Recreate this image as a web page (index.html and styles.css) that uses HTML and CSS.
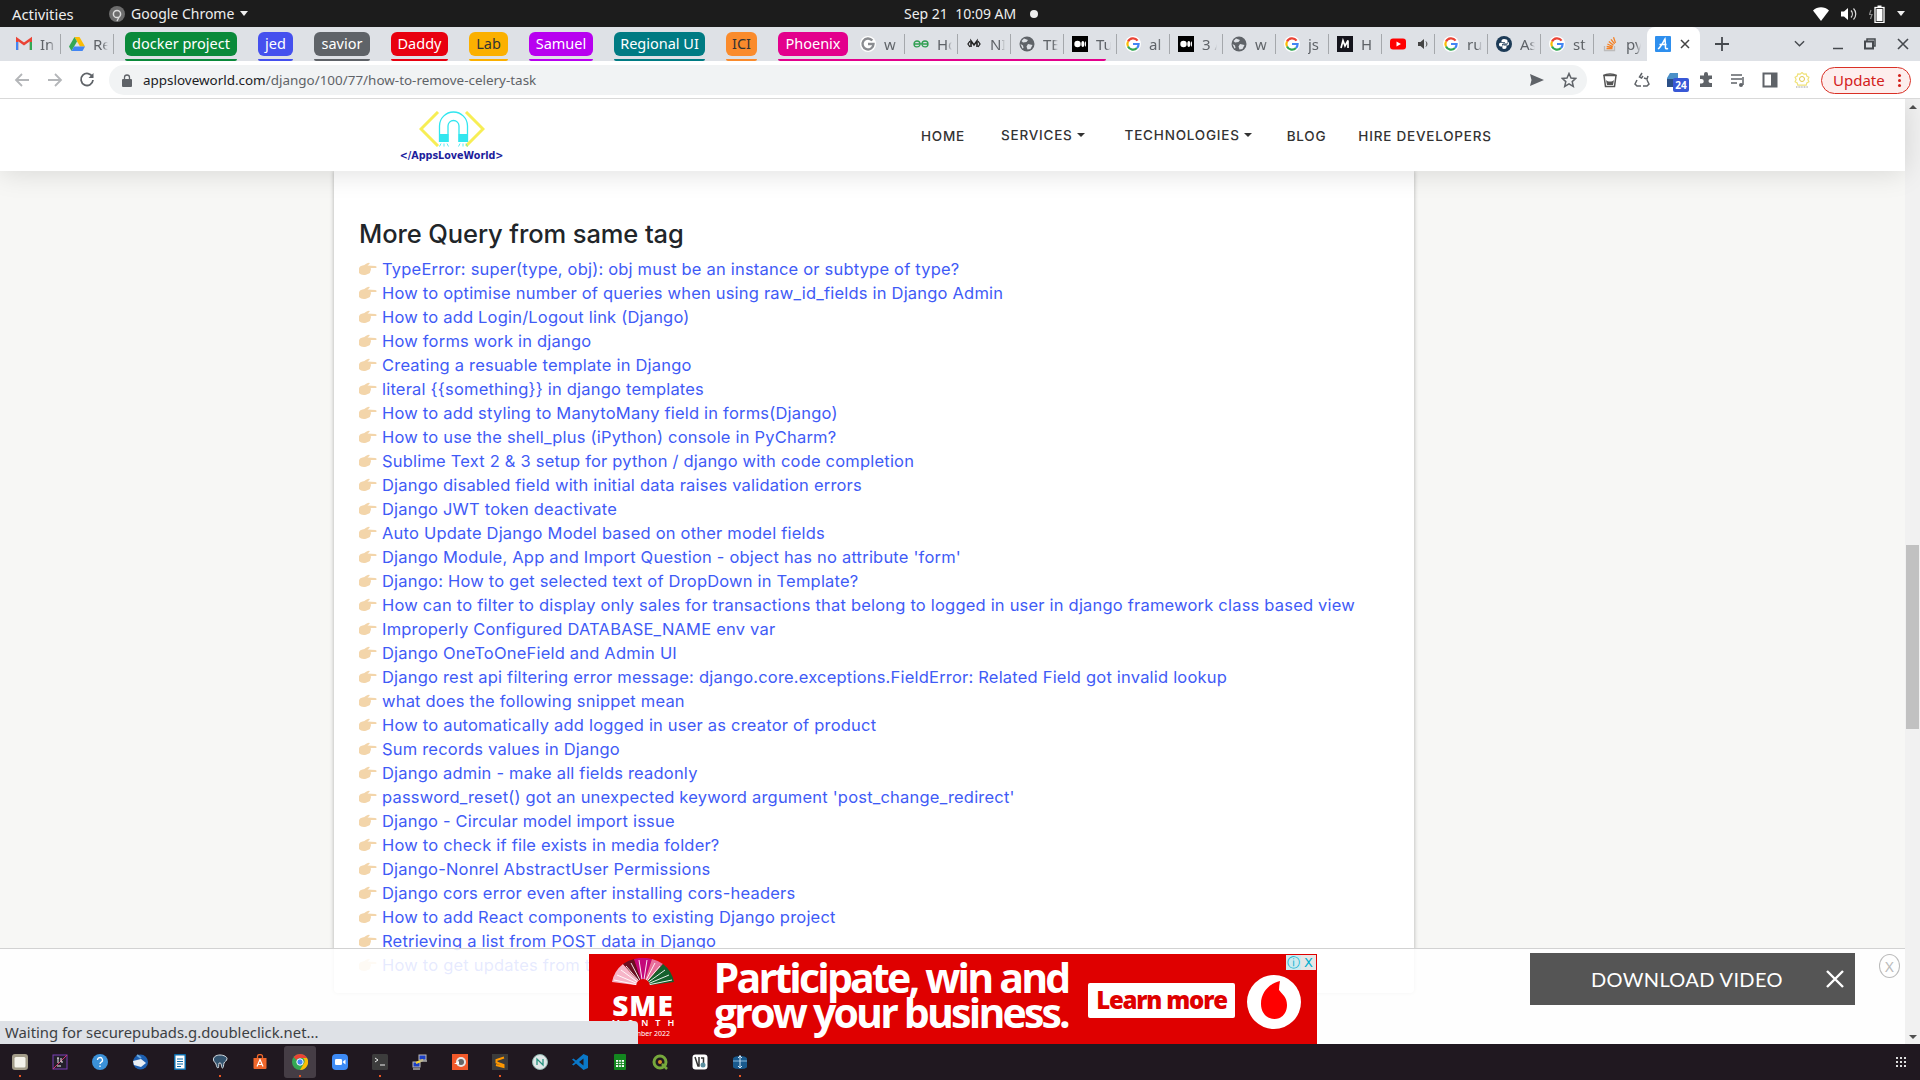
FILE: index.html
```html
<!DOCTYPE html>
<html lang="en">
<head>
<meta charset="utf-8">
<title>How to remove celery task</title>
<link rel="stylesheet" href="styles.css">
</head>
<body>
<svg class="defs" width="0" height="0" aria-hidden="true">
  <symbol id="i-g" viewBox="0 0 16 16"><circle cx="8" cy="8" r="8" fill="#fff"/><path d="M12.6 4.6A5.6 5.6 0 0 0 3 5.5" fill="none" stroke="#ea4335" stroke-width="2.2"/><path d="M3 5.5a5.6 5.6 0 0 0 0 5" fill="none" stroke="#fbbc05" stroke-width="2.2"/><path d="M3 10.500a5.600 5.600 0 0 0 9 1.500" fill="none" stroke="#34a853" stroke-width="2.2"/><path d="M12 12c1-1 1.600-2.200 1.600-4H8" fill="none" stroke="#4285f4" stroke-width="2.200"/></symbol>
  <symbol id="i-ggrey" viewBox="0 0 16 16"><circle cx="8" cy="8" r="8" fill="#fff"/><path d="M12.300 4.500A5.500 5.500 0 1 0 13.500 8H8" fill="none" stroke="#8a8c90" stroke-width="2.400"/></symbol>
  <symbol id="i-gfg" viewBox="0 0 16 16"><path d="M1 8h14M7 8c0-4-6-4-6 0s5 3.500 6 1M9 8c0-4 6-4 6 0s-5 3.500-6 1" fill="none" stroke="#2f9e50" stroke-width="1.300"/></symbol>
  <symbol id="i-mm" viewBox="0 0 16 16"><path d="M4 5 2 8l2 3M12 5l2 3-2 3" fill="none" stroke="#222" stroke-width="1.300"/><path d="M5 11V5l3 4 3-4v6" fill="none" stroke="#222" stroke-width="1.600"/></symbol>
  <symbol id="i-globe" viewBox="0 0 16 16"><circle cx="8" cy="8" r="7.500" fill="#5f6368"/><path d="M5 2.500 9 4 7.500 6 4 6.500 2.500 5zM9 8l4.500 1-2 4-3 .5-1-3zM1.500 8 4 9.500l.5 2.500-1 .5z" fill="#dee1e6"/></symbol>
  <symbol id="i-med" viewBox="0 0 16 16"><rect width="16" height="16" fill="#000"/><circle cx="5.500" cy="8" r="3.200" fill="#fff"/><ellipse cx="10.800" cy="8" rx="1.500" ry="3" fill="#fff"/><ellipse cx="13.400" cy="8" rx=".6" ry="2.700" fill="#fff"/></symbol>
  <symbol id="i-mb" viewBox="0 0 16 16"><rect width="16" height="16" fill="#14141c"/><path d="M4 12 6 4.500 8 10l3-5.500V12" fill="none" stroke="#fff" stroke-width="1.700"/></symbol>
  <symbol id="i-yt" viewBox="0 0 16 16"><rect y="2.500" width="16" height="11" rx="3" fill="#f00"/><path d="m6.500 5.500 4.500 2.500-4.500 2.500z" fill="#fff"/></symbol>
  <symbol id="i-py" viewBox="0 0 16 16"><circle cx="8" cy="8" r="8" fill="#1d3b57"/><path d="M8 3c-2 0-2.500 1-2.500 2v1H9v.8H4.500C3.500 6.800 3 7.500 3 8.500S3.600 10.500 4.500 10.500H6V9c0-1 .8-1.500 1.700-1.500h2.600c.7 0 1.200-.6 1.200-1.300V4.800C11.500 3.700 10 3 8 3z" fill="#fff"/><path d="M8 13c2 0 2.500-1 2.500-2v-1H7.500v-.6h4c1 0 1.500-.7 1.500-1.700S12.400 5.800 11.700 5.800v1.500c0 1-.8 1.500-1.700 1.500H7.500c-.7 0-1.200.6-1.200 1.300v1.200C6.300 12.300 6.500 13 8 13z" fill="#fff"/></symbol>
  <symbol id="i-so" viewBox="0 0 16 16"><path d="M2.500 10v4.500h10V10" fill="none" stroke="#bcbbbb" stroke-width="1.300"/><path d="M4.500 12.500h6M4.700 10.300l5.900 1.200M5.400 8l5.400 2.500M6.800 5.500l4.700 3.800M9 3.300l3.600 4.600M11.500 1.300l2 5.600" fill="none" stroke="#f48024" stroke-width="1.300"/></symbol>
  <symbol id="i-als" viewBox="0 0 16 16"><rect width="16" height="16" rx="1" fill="#2e8fee"/><path d="M3 13C6 11 8 6 10 3c.5 3 .3 6 .5 9 .2 1 1.500 1 2.500 .3M4.500 8.500h7" fill="none" stroke="#fff" stroke-width="1.500"/></symbol>
  <symbol id="i-hand" viewBox="0 0 18 14"><path d="M0 6.500C1 3.500 3 3.500 5 3.200 7 2 8.500 .8 10 .8c1 0 1 1-.2 1.700L8.500 3.400l7.800 .5c1.800 .2 1.800 2.200 0 2.200h-4.800c.8 .8 .6 1.500 0 1.900.5 .8 .2 1.500-.5 1.800.3 .9-.3 1.500-1 1.600L7 12.700C4 13.500 1.500 12.500 0 11z" fill="#f3d5aa"/></symbol>
</svg>

<header class="topbar">
  <div class="top-left">
    <span class="activities">Activities</span>
    <span class="app">
      <svg class="app-icon" viewBox="0 0 16 16"><circle cx="8" cy="8" r="8" fill="#6d6d6d"/><circle cx="8" cy="8" r="3.600" fill="none" stroke="#ddd" stroke-width="1.500"/><path d="M10 11l-2 4" stroke="#ddd" stroke-width="1.300"/></svg>
      Google Chrome
      <i class="caret-w"></i>
    </span>
  </div>
  <div class="clock"><span>Sep 21&nbsp; 10:09 AM</span><i class="rec"></i></div>
  <div class="tray">
    <svg class="tray-wifi" viewBox="0 0 16 14"><path d="M0 3.500C4.500-.8 11.500-.8 16 3.500L8 14z" fill="#fff"/></svg>
    <svg class="tray-vol" viewBox="0 0 16 14"><path d="M0 4.500h3L7 1v12L3 9.500H0z" fill="#fff"/><path d="M10 3.500c1.800 2 1.800 5 0 7M12.500 1.500c3 3 3 8 0 11" fill="none" stroke="#ddd" stroke-width="1.200"/></svg>
    <svg class="tray-bat" viewBox="0 0 16 18"><path d="M2 5 .5 9.500H3L1.500 14" fill="none" stroke="#888" stroke-width="1.200"/><rect x="6" y="2.500" width="9" height="15" fill="none" stroke="#fff" stroke-width="1.300"/><rect x="8.500" y=".5" width="4" height="2" fill="#fff"/><rect x="7.500" y="4" width="6" height="12" fill="#fff"/></svg>
    <i class="caret-w"></i>
  </div>
</header>

<nav class="tabstrip">
  <div class="tab"><svg class="fav" viewBox="0 0 16 16"><path d="M1 14V3l7 5 7-5v11" fill="none" stroke="#ea4335" stroke-width="2.400"/><path d="M1 14V6" stroke="#4285f4" stroke-width="2.400"/><path d="M15 14V6" stroke="#34a853" stroke-width="2.400"/></svg><span class="tab-label">In</span></div>
  <div class="tab"><svg class="fav" viewBox="0 0 16 16"><path d="M5.500 1h5L16 10.500h-5z" fill="#fbbc05"/><path d="M5.500 1 0 10.500 2.500 15 8 5.500z" fill="#34a853"/><path d="M2.500 15h11l2.500-4.500H5z" fill="#4285f4"/></svg><span class="tab-label">Re</span></div>
  <div class="group g-green"><span class="chip">docker project</span></div>
  <div class="group g-blue"><span class="chip">jed</span></div>
  <div class="group g-grey"><span class="chip">savior</span></div>
  <div class="group g-red"><span class="chip">Daddy</span></div>
  <div class="group g-yellow"><span class="chip">Lab</span></div>
  <div class="group g-purple"><span class="chip">Samuel</span></div>
  <div class="group g-teal"><span class="chip">Regional UI</span></div>
  <div class="group g-orange"><span class="chip">ICI</span></div>
  <div class="group g-pink">
    <span class="chip">Phoenix</span>
    <div class="tab"><svg class="fav"><use href="#i-ggrey"/></svg><span class="tab-label">w</span></div>
    <div class="tab"><svg class="fav"><use href="#i-gfg"/></svg><span class="tab-label">Ho</span></div>
    <div class="tab"><svg class="fav"><use href="#i-mm"/></svg><span class="tab-label">NI</span></div>
    <div class="tab"><svg class="fav"><use href="#i-globe"/></svg><span class="tab-label">TE</span></div>
    <div class="tab"><svg class="fav"><use href="#i-med"/></svg><span class="tab-label">Tu</span></div>
  </div>
  <div class="tab"><svg class="fav"><use href="#i-g"/></svg><span class="tab-label">al</span></div>
  <div class="tab"><svg class="fav"><use href="#i-med"/></svg><span class="tab-label">3 /</span></div>
  <div class="tab"><svg class="fav"><use href="#i-globe"/></svg><span class="tab-label">w</span></div>
  <div class="tab"><svg class="fav"><use href="#i-g"/></svg><span class="tab-label">js</span></div>
  <div class="tab"><svg class="fav"><use href="#i-mb"/></svg><span class="tab-label">H</span></div>
  <div class="tab"><svg class="fav"><use href="#i-yt"/></svg><svg class="tab-audio" viewBox="0 0 12 12"><path d="M0 4h2.500L6 1v10L2.500 8H0z" fill="#444"/><path d="M8 3.500c1.200 1.500 1.200 3.500 0 5" fill="none" stroke="#444"/></svg></div>
  <div class="tab"><svg class="fav"><use href="#i-g"/></svg><span class="tab-label">ru</span></div>
  <div class="tab"><svg class="fav"><use href="#i-py"/></svg><span class="tab-label">As</span></div>
  <div class="tab"><svg class="fav"><use href="#i-g"/></svg><span class="tab-label">st</span></div>
  <div class="tab tab-last"><svg class="fav"><use href="#i-so"/></svg><span class="tab-label">py</span></div>
  <div class="tab-active"><svg class="fav"><use href="#i-als"/></svg><svg class="tab-x" viewBox="0 0 10 10"><path d="m1 1 8 8M9 1 1 9" stroke="#444" stroke-width="1.500"/></svg></div>
  <svg class="new-tab" viewBox="0 0 14 14"><path d="M7 0v14M0 7h14" stroke="#45494e" stroke-width="1.800"/></svg>
  <svg class="win-chev" viewBox="0 0 12 8"><path d="m1 1 5 5 5-5" fill="none" stroke="#45494e" stroke-width="1.500"/></svg>
  <svg class="win-min" viewBox="0 0 12 12"><path d="M1 10.500h10" stroke="#45494e" stroke-width="1.500"/></svg>
  <svg class="win-max" viewBox="0 0 12 12"><path d="M3 3V1h8v7H9" fill="none" stroke="#45494e" stroke-width="1.500"/><rect x="1" y="3.500" width="8" height="7" fill="none" stroke="#45494e" stroke-width="2"/></svg>
  <svg class="win-close" viewBox="0 0 12 12"><path d="m1 1 10 10M11 1 1 11" stroke="#45494e" stroke-width="1.600"/></svg>
</nav>

<div class="toolbar">
  <svg class="tb back" viewBox="0 0 16 16"><path d="M15 8H2M8 2 2 8l6 6" fill="none" stroke="#b4b6b9" stroke-width="1.800"/></svg>
  <svg class="tb fwd" viewBox="0 0 16 16"><path d="M1 8h13M8 2l6 6-6 6" fill="none" stroke="#b4b6b9" stroke-width="1.800"/></svg>
  <svg class="tb reload" viewBox="0 0 16 16"><path d="M13.500 5A6 6 0 1 0 14 8" fill="none" stroke="#5f6368" stroke-width="1.800"/><path d="M14.500 1v5h-5z" fill="#5f6368"/></svg>
  <div class="omnibox">
    <svg class="lock" viewBox="0 0 10 13"><rect y="5" width="10" height="8" rx="1" fill="#5f6368"/><path d="M2.500 5V3.500a2.500 2.500 0 0 1 5 0V5" fill="none" stroke="#5f6368" stroke-width="1.300"/></svg>
    <span class="url"><b>appsloveworld.com</b>/django/100/77/how-to-remove-celery-task</span>
    <svg class="omni-send" viewBox="0 0 16 14"><path d="M1 1 15 7 1 13l1.500-6z" fill="#5f6368"/></svg>
    <svg class="omni-star" viewBox="0 0 16 16"><path d="m8 1.500 2 4.500 4.800.4-3.600 3.200 1.100 4.800L8 11.900l-4.300 2.500 1.100-4.800L1.200 6.400 6 6z" fill="none" stroke="#5f6368" stroke-width="1.500"/></svg>
  </div>
  <div class="exts">
    <svg class="ext" viewBox="0 0 16 16"><path d="M2 3.500h12l-1.500 11h-9z" fill="#fff" stroke="#555" stroke-width="1.500"/><path d="M1.500 3.500c3-2 10-2 13 0" fill="none" stroke="#555" stroke-width="1.500"/><path d="M4 8c2 2 6 2 8 0l-1 5H5z" fill="#555"/></svg>
    <svg class="ext" viewBox="0 0 16 16"><path d="m8 1-2.500 4 2 1L9 4M13 8l2 4-2 2H9M3 8l-2 4 2 2h4M10 6l3 1 1-3" fill="none" stroke="#5f6368" stroke-width="1.500"/></svg>
    <span class="ext ext-badge"><svg class="ext-s" viewBox="0 0 16 16"><path d="M1 6 4 1h8v6H1z" fill="#4a90c8"/><path d="M1 7h11v8H1z" fill="#2b4f87"/></svg><b class="badge">24</b></span>
    <svg class="ext" viewBox="0 0 16 16"><path d="M6 2a2 2 0 0 1 4 0v1.500h4V7h-1.500a2 2 0 0 0 0 4H14v4H2v-3.500h1.500a2.200 2.200 0 0 0 0-4.500H2V3.500h4z" fill="#5f6368"/></svg>
    <svg class="ext" viewBox="0 0 16 16"><path d="M1 3h11M1 7h11M1 11h6" stroke="#5f6368" stroke-width="1.500"/><path d="M13 5v8" stroke="#5f6368" stroke-width="1.500"/><circle cx="11" cy="13" r="2" fill="#5f6368"/></svg>
    <svg class="ext" viewBox="0 0 16 16"><rect x="1.500" y="1.500" width="13" height="13" fill="none" stroke="#5f6368" stroke-width="2"/><rect x="9" y="1.500" width="5.500" height="13" fill="#5f6368"/></svg>
    <svg class="ext" viewBox="0 0 16 16"><path d="M8 .5l1.800 1.600 2.400-.3.600 2.300 2.100 1.200-1 2.200 1 2.200-2.100 1.200-.6 2.300H3.800l-.6-2.300L1.100 9.700l1-2.200-1-2.200 2.100-1.200.6-2.300 2.400.3z" fill="none" stroke="#f0e27a" stroke-width="1.200"/><circle cx="8" cy="7" r="2.500" fill="none" stroke="#e2c94c"/><path d="M2 15h12" stroke="#999" stroke-dasharray="1 .6"/></svg>
    <div class="update"><span>Update</span><i class="dots"></i></div>
  </div>
</div>

<div class="viewport">
  <div class="page">
    <div class="site-nav">
      <div class="logo">
        <svg class="logo-mark" viewBox="0 0 66 36">
          <path d="M19 1 2 18 19 35M47 1 64 18 47 35" fill="none" stroke="#f7ee55" stroke-width="3"/>
          <path d="M20.500 31V15a14 14 0 0 1 28 0V31" fill="none" stroke="#31e6ef" stroke-width="1.300"/>
          <path d="M29 31V15a5.500 5.500 0 0 1 11 0V31" fill="none" stroke="#31e6ef" stroke-width="1.300"/>
          <rect x="20" y="23" width="9.500" height="8" fill="#31e6ef"/><rect x="39.500" y="23" width="9.500" height="8" fill="#31e6ef"/>
          <path d="M25 32.500v3M22 32.500l-1.500 3M28 32.500l1.500 3M44 32.500v3M41 32.500l-1.500 3M47 32.500l1.500 3" stroke="#31e6ef" stroke-width=".8"/>
        </svg>
        <span class="logo-text">&lt;/AppsLoveWorld&gt;</span>
      </div>
      <ul class="menu">
        <li class="m-home">HOME</li>
        <li class="m-drop m-services">SERVICES<i class="caret-d"></i></li>
        <li class="m-drop m-tech">TECHNOLOGIES<i class="caret-d"></i></li>
        <li class="m-blog">BLOG</li>
        <li class="m-hire">HIRE DEVELOPERS</li>
      </ul>
    </div>
    <main class="main">
      <section class="card">
        <h2 class="card-title">More Query from same tag</h2>
        <ul class="links">
          <li><svg class="hand"><use href="#i-hand"/></svg><a>TypeError: super(type, obj): obj must be an instance or subtype of type?</a></li>
          <li><svg class="hand"><use href="#i-hand"/></svg><a>How to optimise number of queries when using raw_id_fields in Django Admin</a></li>
          <li><svg class="hand"><use href="#i-hand"/></svg><a>How to add Login/Logout link (Django)</a></li>
          <li><svg class="hand"><use href="#i-hand"/></svg><a>How forms work in django</a></li>
          <li><svg class="hand"><use href="#i-hand"/></svg><a>Creating a resuable template in Django</a></li>
          <li><svg class="hand"><use href="#i-hand"/></svg><a>literal {{something}} in django templates</a></li>
          <li><svg class="hand"><use href="#i-hand"/></svg><a>How to add styling to ManytoMany field in forms(Django)</a></li>
          <li><svg class="hand"><use href="#i-hand"/></svg><a>How to use the shell_plus (iPython) console in PyCharm?</a></li>
          <li><svg class="hand"><use href="#i-hand"/></svg><a>Sublime Text 2 &amp; 3 setup for python / django with code completion</a></li>
          <li><svg class="hand"><use href="#i-hand"/></svg><a>Django disabled field with initial data raises validation errors</a></li>
          <li><svg class="hand"><use href="#i-hand"/></svg><a>Django JWT token deactivate</a></li>
          <li><svg class="hand"><use href="#i-hand"/></svg><a>Auto Update Django Model based on other model fields</a></li>
          <li><svg class="hand"><use href="#i-hand"/></svg><a>Django Module, App and Import Question - object has no attribute 'form'</a></li>
          <li><svg class="hand"><use href="#i-hand"/></svg><a>Django: How to get selected text of DropDown in Template?</a></li>
          <li><svg class="hand"><use href="#i-hand"/></svg><a>How can to filter to display only sales for transactions that belong to logged in user in django framework class based view</a></li>
          <li><svg class="hand"><use href="#i-hand"/></svg><a>Improperly Configured DATABASE_NAME env var</a></li>
          <li><svg class="hand"><use href="#i-hand"/></svg><a>Django OneToOneField and Admin UI</a></li>
          <li><svg class="hand"><use href="#i-hand"/></svg><a>Django rest api filtering error message: django.core.exceptions.FieldError: Related Field got invalid lookup</a></li>
          <li><svg class="hand"><use href="#i-hand"/></svg><a>what does the following snippet mean</a></li>
          <li><svg class="hand"><use href="#i-hand"/></svg><a>How to automatically add logged in user as creator of product</a></li>
          <li><svg class="hand"><use href="#i-hand"/></svg><a>Sum records values in Django</a></li>
          <li><svg class="hand"><use href="#i-hand"/></svg><a>Django admin - make all fields readonly</a></li>
          <li><svg class="hand"><use href="#i-hand"/></svg><a>password_reset() got an unexpected keyword argument 'post_change_redirect'</a></li>
          <li><svg class="hand"><use href="#i-hand"/></svg><a>Django - Circular model import issue</a></li>
          <li><svg class="hand"><use href="#i-hand"/></svg><a>How to check if file exists in media folder?</a></li>
          <li><svg class="hand"><use href="#i-hand"/></svg><a>Django-Nonrel AbstractUser Permissions</a></li>
          <li><svg class="hand"><use href="#i-hand"/></svg><a>Django cors error even after installing cors-headers</a></li>
          <li><svg class="hand"><use href="#i-hand"/></svg><a>How to add React components to existing Django project</a></li>
          <li><svg class="hand"><use href="#i-hand"/></svg><a>Retrieving a list from POST data in Django</a></li>
          <li><svg class="hand"><use href="#i-hand"/></svg><a>How to get updates from the model in Django</a></li>
        </ul>
      </section>
    </main>
  </div>
  <div class="scrollbar">
    <i class="sb-up"></i>
    <i class="sb-thumb"></i>
    <i class="sb-down"></i>
  </div>

  <aside class="anchor">
    <div class="ad">
      <div class="sme">
        <svg class="fan" viewBox="0 0 64 28">
          <path d="M32 28 1 24A32 30 0 0 1 12 6z" fill="#f6b5c8"/>
          <path d="M32 28 12 6A32 30 0 0 1 23 1z" fill="#6a0f20"/>
          <path d="M32 28 23 1A32 30 0 0 1 41 1z" fill="#c4087a"/>
          <path d="M32 28 41 1A32 30 0 0 1 52 6z" fill="#e8709c"/>
          <path d="M32 28 52 6A32 30 0 0 1 63 24z" fill="#14602c"/>
          <path d="M3 22 32 28M6 17 32 28M10 12 32 28M15 8 32 28M20 5 32 28M28 2 32 28M36 2 32 28M44 5 32 28M49 8 32 28M54 12 32 28M58 17 32 28M61 22 32 28" stroke="#fff" stroke-width=".9"/>
          <circle cx="32" cy="28" r="7" fill="#df0000"/>
        </svg>
        <span class="sme-t">SME</span>
        <span class="sme-m">MONTH</span>
        <span class="sme-d">September 2022</span>
      </div>
      <div class="ad-copy"><span>Participate, win and</span><span>grow your business.</span></div>
      <div class="ad-btn">Learn more</div>
      <svg class="voda" viewBox="0 0 54 54"><circle cx="27" cy="27" r="27" fill="#fff"/><path d="M33 6C24 8 14 16 14 29c0 9 6 15 13.500 15S40 38 40 30c0-8-5-11-8-15 0-3 .5-6 1-9z" fill="#f00"/></svg>
      <div class="ad-marks"><span class="mark-i">&#9432;</span><span class="mark-x">X</span></div>
    </div>
    <div class="video"><span>DOWNLOAD VIDEO</span><svg class="video-x" viewBox="0 0 18 18"><path d="m1 1 16 16M17 1 1 17" stroke="#fff" stroke-width="2.400"/></svg></div>
    <span class="circle-x">X</span>
  </aside>
  <div class="status">Waiting for securepubads.g.doubleclick.net...</div>
</div>

<footer class="dock">
  <span class="dk on"><svg viewBox="0 0 16 16"><rect width="16" height="16" rx="3" fill="#a39c88"/><rect x="2.500" y="3" width="11" height="10.500" rx="1.500" fill="#f4f2ea"/></svg></span>
  <span class="dk"><svg viewBox="0 0 16 16"><rect x="1" y="1" width="14" height="14" fill="#23202a" stroke="#7b3fb6"/><path d="M1 15 15 1" stroke="#d3326c" stroke-width="1"/><path d="M5 4h2M6 4v5M9 4v4h2M5 12h4" stroke="#eee" fill="none"/></svg></span>
  <span class="dk"><svg viewBox="0 0 16 16"><circle cx="8" cy="8" r="8" fill="#3b91d8"/><path d="M5.500 6a2.500 2.500 0 1 1 3.500 2.300C8.200 8.700 8 9.200 8 10M8 11.500V13" fill="none" stroke="#fff" stroke-width="1.300"/></svg></span>
  <span class="dk"><svg viewBox="0 0 16 16"><circle cx="8.500" cy="8" r="7.500" fill="#1d5fb0"/><path d="M1 7l8-2 5 4-5 4-7-2z" fill="#e9eef4"/><path d="M5 1 9 4" stroke="#6aa8e0" stroke-width="2"/></svg></span>
  <span class="dk"><svg viewBox="0 0 16 16"><rect x="2" width="12" height="16" rx="1" fill="#0b6aa8"/><rect x="3.500" y="1.500" width="9" height="13" fill="#fff"/><path d="M5 5h6M5 7.500h6M5 10h6M5 12.500h4" stroke="#0b6aa8"/></svg></span>
  <span class="dk on"><svg viewBox="0 0 16 16"><path d="M8 1C4 1 1 3 1.500 6c.3 2 2 2.500 2.500 4 .5 2 1 4 2 4s.5-3 1-5c1 0 1.500 0 2 .5.5 2 .5 4.500 1.500 4.500s1-3 1.500-5c.5-1.500 3-2 3-4.500C15 3 12 1 8 1z" fill="#33536e" stroke="#d5dde3"/></svg></span>
  <span class="dk"><svg viewBox="0 0 16 16"><path d="M1.500 4h13v10a1 1 0 0 1-1 1h-11a1 1 0 0 1-1-1z" fill="#f1672b"/><path d="M5.500 4V2.500a2.500 2 0 0 1 5 0V4" fill="none" stroke="#f1672b" stroke-width="1.300"/><path d="m5 12.500 3-7 3 7M6.500 10.500h3" fill="none" stroke="#fff" stroke-width="1.200"/></svg></span>
  <span class="dk dk-active on"><svg viewBox="0 0 16 16"><circle cx="8" cy="8" r="8" fill="#34a853"/><path d="M8 0a8 8 0 0 1 7 4H8a4 4 0 0 0-3.500 2L1.700 3A8 8 0 0 1 8 0z" fill="#ea4335"/><path d="M15 4a8 8 0 0 1-7 12l3.500-6A4 4 0 0 0 11 4z" fill="#fbbc05"/><circle cx="8" cy="8" r="3.200" fill="#4285f4" stroke="#fff"/></svg></span>
  <span class="dk"><svg viewBox="0 0 16 16"><rect width="16" height="16" rx="4" fill="#3d8bf5"/><rect x="3" y="5" width="7" height="6" rx="1.300" fill="#fff"/><path d="m10.500 8 3-2.500v5z" fill="#fff"/></svg></span>
  <span class="dk on"><svg viewBox="0 0 16 16"><rect width="16" height="16" rx="1.500" fill="#3c3c3c"/><path d="m3 4 3 2-3 2M8 11h5" fill="none" stroke="#eee"/></svg></span>
  <span class="dk"><svg viewBox="0 0 16 16"><rect x="7" y="1" width="7" height="5" fill="#1c3fc4" stroke="#bbb"/><rect x="1" y="8" width="7" height="5" fill="#1c3fc4" stroke="#bbb"/><path d="M11 6 4 9" stroke="#f2d13a" stroke-width="2"/><path d="M1 15h7M8 7h7" stroke="#aaa" stroke-width="1.500"/></svg></span>
  <span class="dk"><svg viewBox="0 0 16 16"><rect width="16" height="16" fill="#f1592a"/><circle cx="9" cy="8" r="5" fill="#e8e8e8"/><circle cx="9" cy="8" r="3" fill="#666"/><path d="M2 10l5-3v3z" fill="#fff"/></svg></span>
  <span class="dk on"><svg viewBox="0 0 16 16"><rect width="16" height="16" fill="#3b3b3b"/><path d="M12 3.500 4.500 6v2.500L11.500 11v2L4 11" fill="none" stroke="#ff9800" stroke-width="2"/></svg></span>
  <span class="dk"><svg viewBox="0 0 16 16"><circle cx="8" cy="8" r="7.500" fill="#dfe7e7" stroke="#8fb5ad"/><path d="M5 11V5l6 6V5" fill="none" stroke="#26927e" stroke-width="1.300"/></svg></span>
  <span class="dk"><svg viewBox="0 0 16 16"><path d="M11.500 0 16 2v12l-4.500 2L4 9.500 1.500 11.500 0 10.500 3 8 0 5.500 1.500 4.500 4 6.500z" fill="#0a78c8"/><path d="M11.500 4.500 7 8l4.500 3.500z" fill="#201820"/></svg></span>
  <span class="dk"><svg viewBox="0 0 16 16"><rect x="2" width="12" height="16" rx="1" fill="#13861f"/><rect x="4" y="6" width="8" height="7" fill="#fff"/><path d="M4 8.300h8M4 10.600h8M6.700 6v7M9.300 6v7" stroke="#13861f"/></svg></span>
  <span class="dk"><svg viewBox="0 0 16 16"><circle cx="8" cy="8" r="6" fill="none" stroke="#76a83c" stroke-width="3"/><circle cx="8" cy="8" r="2" fill="#d28b26"/><path d="m10 10 5 5" stroke="#76a83c" stroke-width="2.500"/></svg></span>
  <span class="dk"><svg viewBox="0 0 16 16"><rect x=".5" y=".5" width="15" height="15" rx="3" fill="#fff"/><path d="m3 3 3 9h1V3M9 4h2.500v5" fill="none" stroke="#333" stroke-width="1.500"/><circle cx="11" cy="11" r="2.500" fill="#5a8fa0"/></svg></span>
  <span class="dk on"><svg viewBox="0 0 16 16"><path d="M1 5c0-2 3-3 7-3s7 1 7 3v8c0 1-3 2-7 2s-7-1-7-2z" fill="#195a8e"/><path d="M1 7h14" stroke="#8bb8da"/><path d="M8 1v13M6 4l2-2 2 2M6 12l2 2 2-2" fill="none" stroke="#cfe6f7"/></svg></span>
  <span class="dock-grid"></span>
</footer>
</body>
</html>
```

FILE: styles.css
```css
* { box-sizing: border-box; }
html, body { margin: 0; height: 100%; }
body {
  width: 1920px; height: 1080px; overflow: hidden;
  display: flex; flex-direction: column;
  font-family: "Noto Sans", sans-serif;
  background: #fff;
}
.defs { position: absolute; }
i { display: block; font-style: normal; }
ul { list-style: none; margin: 0; padding: 0; }

/* GNOME top bar */
.topbar {
  height: 27px; flex: none; background: #1c1c1c; color: #eee;
  display: flex; align-items: center; font-size: 14px; position: relative;
}
.top-left { width: 904px; display: flex; align-items: center; padding-left: 12px; }
.activities { width: 97px; font-size: 14.800px; }
.app { display: flex; align-items: center; gap: 6px; white-space: nowrap; }
.app-icon { width: 16px; height: 16px; }
.caret-w { width: 0; height: 0; border: 4.500px solid transparent; border-top: 5px solid #eee; border-bottom: 0; }
.clock { display: flex; align-items: center; gap: 14px; flex: 1; }
.rec { width: 8px; height: 8px; border-radius: 50%; background: #eee; }
.tray { display: flex; align-items: center; padding-right: 15px; gap: 12px; }
.tray-wifi { width: 16px; height: 14px; }
.tray-vol { width: 16px; height: 14px; }
.tray-bat { width: 16px; height: 18px; }

/* tab strip */
.tabstrip {
  height: 34px; flex: none; background: #dee1e6;
  display: flex; align-items: flex-start; padding: 7px 0 0 8px;
  font-size: 14px; color: #5f6368;
}
.tab {
  flex: none; width: 53px; height: 20px; padding-left: 8px;
  display: flex; align-items: center; gap: 8px; overflow: hidden;
  border-right: 1px solid #a5a8ac; margin-top: 0;
}
.fav { width: 16px; height: 16px; flex: none; }
.tab-label {
  white-space: nowrap; font-size: 15px; width: 15px; overflow: hidden; flex: none;
  -webkit-mask-image: linear-gradient(90deg, #000 65%, transparent);
  mask-image: linear-gradient(90deg, #000 65%, transparent);
}
.tab-audio { width: 12px; height: 12px; margin-left: 4px; }
.tab-last { border-right: 0; }

.group {
  flex: none; height: 29px; margin: -2px 0 -5px 21px;
  display: flex; align-items: flex-start;
  border-bottom: 2px solid var(--c);
  border-radius: 0 0 2px 2px;
}
.group:nth-child(3) { margin-left: 11px; }
.chip {
  flex: none; width: var(--w); height: 24px; border-radius: 6px;
  background: var(--c); color: #fff; font-size: 14.500px; line-height: 23px;
  text-align: center; white-space: nowrap;
}
.g-green { --c: #0a8a3a; --w: 112px; }
.g-blue { --c: #4550ee; --w: 35px; }
.g-grey { --c: #5f6368; --w: 56px; }
.g-red { --c: #e8000f; --w: 57px; }
.g-yellow { --c: #fbb000; --w: 39px; }
.g-yellow .chip, .g-orange .chip { color: #333; }
.g-purple { --c: #b800f0; --w: 64px; }
.g-teal { --c: #007b83; --w: 91px; }
.g-orange { --c: #fa8b2c; --w: 31px; }
.g-pink { --c: #e3008c; --w: 70px; width: 328px; margin-right: 11px; }
.g-pink .chip { margin-right: 4px; }
.g-pink .tab { margin-top: 2px; }

.tab-active {
  flex: none; width: 53px; height: 34px; margin-top: -7px;
  background: #fff; border-radius: 8px 8px 0 0;
  display: flex; align-items: center; gap: 9px; padding-left: 8px;
}
.tab-x { width: 10px; height: 10px; }
.new-tab { width: 14px; height: 14px; margin: 3px 0 0 15px; flex: none; }
.win-chev { width: 11px; height: 8px; margin: 6px 0 0 65px; flex: none; }
.win-min { width: 12px; height: 12px; margin: 4px 0 0 27px; flex: none; }
.win-max { width: 12px; height: 12px; margin: 4px 0 0 20px; flex: none; }
.win-close { width: 12px; height: 12px; margin: 4px 0 0 21px; flex: none; }

/* toolbar */
.toolbar {
  height: 38px; flex: none; background: #fff; border-bottom: 1px solid #d9d9d9;
  display: flex; align-items: flex-start; padding: 4px 10px 0 14px;
}
.tb { width: 16px; height: 16px; flex: none; margin-top: 7px; }
.fwd { margin-left: 17px; }
.reload { margin-left: 16px; }
.omnibox {
  width: 1478px; height: 30px; margin-left: 14px; flex: none;
  background: #f1f3f4; border-radius: 15px;
  display: flex; align-items: center; padding: 0 10px 0 13px;
}
.lock { width: 10px; height: 13px; flex: none; }
.url { margin-left: 11px; font-size: 13.450px; color: #5f6368; flex: 1; white-space: nowrap; margin-top: -1px; }
.url b { font-weight: 400; color: #202124; }
.omni-send { width: 16px; height: 14px; flex: none; }
.omni-star { width: 16px; height: 16px; margin-left: 16px; flex: none; }
.exts { display: flex; align-items: center; height: 30px; margin-left: 15px; flex: none; }
.ext { width: 16px; height: 16px; margin-right: 16px; flex: none; }
.ext-badge { display: block; position: relative; }
.ext-s { width: 16px; height: 16px; display: block; }
.badge {
  position: absolute; left: 7px; top: 6px; width: 16px; height: 14px;
  background: #3858d6; color: #fff; font-size: 10px; line-height: 14px;
  text-align: center; border-radius: 2px;
}
.update {
  width: 90px; height: 27px; margin-left: -5px; flex: none;
  border: 1px solid #d93025; border-radius: 14px; background: #fdeeed;
  color: #d3201a; font-size: 15px;
  display: flex; align-items: center; justify-content: space-between; padding: 0 9px 0 11px;
}
.dots { width: 3px; height: 3px; border-radius: 50%; background: #d3201a; box-shadow: 0 -5px 0 #d3201a, 0 5px 0 #d3201a; }

/* viewport */
.viewport { flex: 1; min-height: 0; display: flex; position: relative; overflow: hidden; background: #f7f7f5; }
.page { flex: 1; min-width: 0; display: flex; flex-direction: column; }
.site-nav {
  height: 72px; flex: none; background: #fff; position: relative; z-index: 2;
  box-shadow: 0 2px 28px rgba(0,0,0,.13);
  display: flex; padding: 12px 0 0 400px;
}
.logo { width: 103px; display: flex; flex-direction: column; align-items: center; }
.logo-mark { width: 66px; height: 36px; flex: none; }
.logo-text {
  font-family: "DejaVu Sans", sans-serif; font-weight: 700; font-size: 9.600px;
  color: #1d1d9c; white-space: nowrap; margin-top: 3px; line-height: 11px;
}
.menu {
  display: flex; padding: 0 0 0 418px; align-items: flex-start;
  font-family: Inter, sans-serif; font-size: 13.500px; letter-spacing: .78px; color: #333; font-weight: 500;
}
.menu li { white-space: nowrap; line-height: 20px; margin-top: 15px; }
.m-drop { display: flex; align-items: center; margin-top: 14px !important; gap: 4px; }
.caret-d { width: 0; height: 0; border: 4px solid transparent; border-top: 4px solid #333; border-bottom: 0; }
.m-services { margin-left: 36px; }
.m-tech { margin-left: 40px; }
.m-blog { margin-left: 35px; }
.m-hire { margin-left: 32px; }

.main { flex: 1; min-height: 0; padding-left: 334px; overflow: hidden; }
.card {
  width: 1080px; height: 822px; background: #fff;
  box-shadow: 0 0 4px rgba(0,0,0,.3);
  border-radius: 0 0 4px 4px;
  padding: 46px 24px 0 25px;
}
.card-title {
  margin: 0 0 6px; font-family: Inter, sans-serif; font-weight: 500;
  font-size: 25.500px; line-height: 34px; color: #212529; letter-spacing: -.1px;
}
.links { font-family: Inter, sans-serif; font-size: 16.500px; letter-spacing: .2px; }
.links li { height: 24px; display: flex; align-items: center; gap: 5px; white-space: nowrap; }
.hand { width: 18px; height: 14px; flex: none; }
.links a { color: #3f5bf6; }

/* scrollbar */
.scrollbar { width: 15px; flex: none; background: #f1f1f1; display: flex; flex-direction: column; align-items: center; }
.sb-up { width: 0; height: 0; margin-top: 6px; border: 4px solid transparent; border-bottom: 4px solid #505050; border-top: 0; }
.sb-thumb { width: 13px; height: 184px; margin-top: 436px; background: #c1c1c1; }
.sb-down { width: 0; height: 0; margin-top: auto; margin-bottom: 5px; border: 4px solid transparent; border-top: 4px solid #505050; border-bottom: 0; }

/* bottom anchor */
.anchor {
  position: absolute; left: 0; right: 15px; bottom: 0; height: 96px; z-index: 3;
  background: rgba(255,255,255,.87); border-top: 1px solid #d2d2d2;
  display: flex; align-items: flex-start; padding: 5px 0 0 589px;
}
.ad {
  width: 728px; height: 90px; flex: none; background: #df0000; position: relative;
  display: flex; align-items: flex-start; color: #fff;
}
.sme { width: 64px; margin: 4px 0 0 22px; display: flex; flex-direction: column; align-items: center; flex: none; }
.fan { width: 64px; height: 28px; flex: none; }
.sme-t { font-family: "Open Sans", sans-serif; font-weight: 800; font-size: 28px; line-height: 24px; margin-top: 7px; letter-spacing: 1px; }
.sme-m { font-size: 9px; line-height: 11px; letter-spacing: 7px; margin-right: -7px; font-weight: 600; }
.sme-d { font-size: 7px; line-height: 11px; white-space: nowrap; }
.ad-copy {
  display: flex; flex-direction: column; align-items: center; width: 362px; margin: 6px 0 0 35px; flex: none;
  font-family: "Open Sans", sans-serif; font-weight: 700; font-size: 41px; line-height: 35px;
  letter-spacing: -2.800px; white-space: nowrap;
}
.ad-btn {
  width: 147px; height: 35px; flex: none; margin: 29px 0 0 16px; background: #fff; border-radius: 2px;
  color: #df0000; font-family: "Open Sans", sans-serif; font-weight: 800; font-size: 24px; line-height: 33px;
  letter-spacing: -1.200px; text-align: center; white-space: nowrap;
}
.voda { width: 54px; height: 54px; margin: 21px 0 0 12px; flex: none; }
.ad-marks { position: absolute; right: 1px; top: 1px; display: flex; font-size: 13px; line-height: 15px; color: #00aecd; }
.mark-i, .mark-x { width: 15px; height: 15px; text-align: center; background: #cdeaf0; font-family: "DejaVu Sans", sans-serif; }
.mark-x { background: #e6e6e6; }
.video {
  width: 325px; height: 52px; margin: -1px 0 0 213px; flex: none; background: #555;
  display: flex; align-items: center; padding: 0 11px 0 61px; color: #fff;
}
.video span { font-family: Lato, sans-serif; font-size: 20px; letter-spacing: .35px; white-space: nowrap; flex: 1; }
.video-x { width: 18px; height: 18px; flex: none; }
.circle-x {
  width: 21px; height: 24px; margin: 0 0 0 24px; flex: none; border: 1px solid #bbb; border-radius: 50%;
  font-size: 15px; line-height: 22px; color: #bbb; text-align: center;
}
.status {
  position: absolute; left: 0; bottom: 0; width: 638px; height: 23px; z-index: 4;
  background: #dee1e6; border-radius: 0 4px 0 0; padding-left: 5px;
  font-size: 14.850px; line-height: 23px; color: #3c4043; white-space: nowrap;
}

/* dock */
.dock {
  height: 36px; flex: none; background: #201820;
  display: flex; align-items: center; position: relative;
}
.dk {
  width: 32px; height: 32px; margin: 0 4px; flex: none;
  display: flex; align-items: center; justify-content: center; border-radius: 3px;
}
.dk svg { width: 16px; height: 16px; }
.dk.on { background: radial-gradient(circle 1.500px at 50% 30px, #e95420 98%, transparent); }
.dk-active.on { background: radial-gradient(circle 1.500px at 50% 30px, #e95420 98%, transparent), #453d45; }
.dock-grid {
  width: 2px; height: 2px; margin: 0 22px 0 auto; flex: none; background: #ddd;
  box-shadow: 4px 0 #ddd, 8px 0 #ddd, 0 4px #ddd, 4px 4px #ddd, 8px 4px #ddd, 0 8px #ddd, 4px 8px #ddd, 8px 8px #ddd;
  transform: translateY(-4px);
}
```
